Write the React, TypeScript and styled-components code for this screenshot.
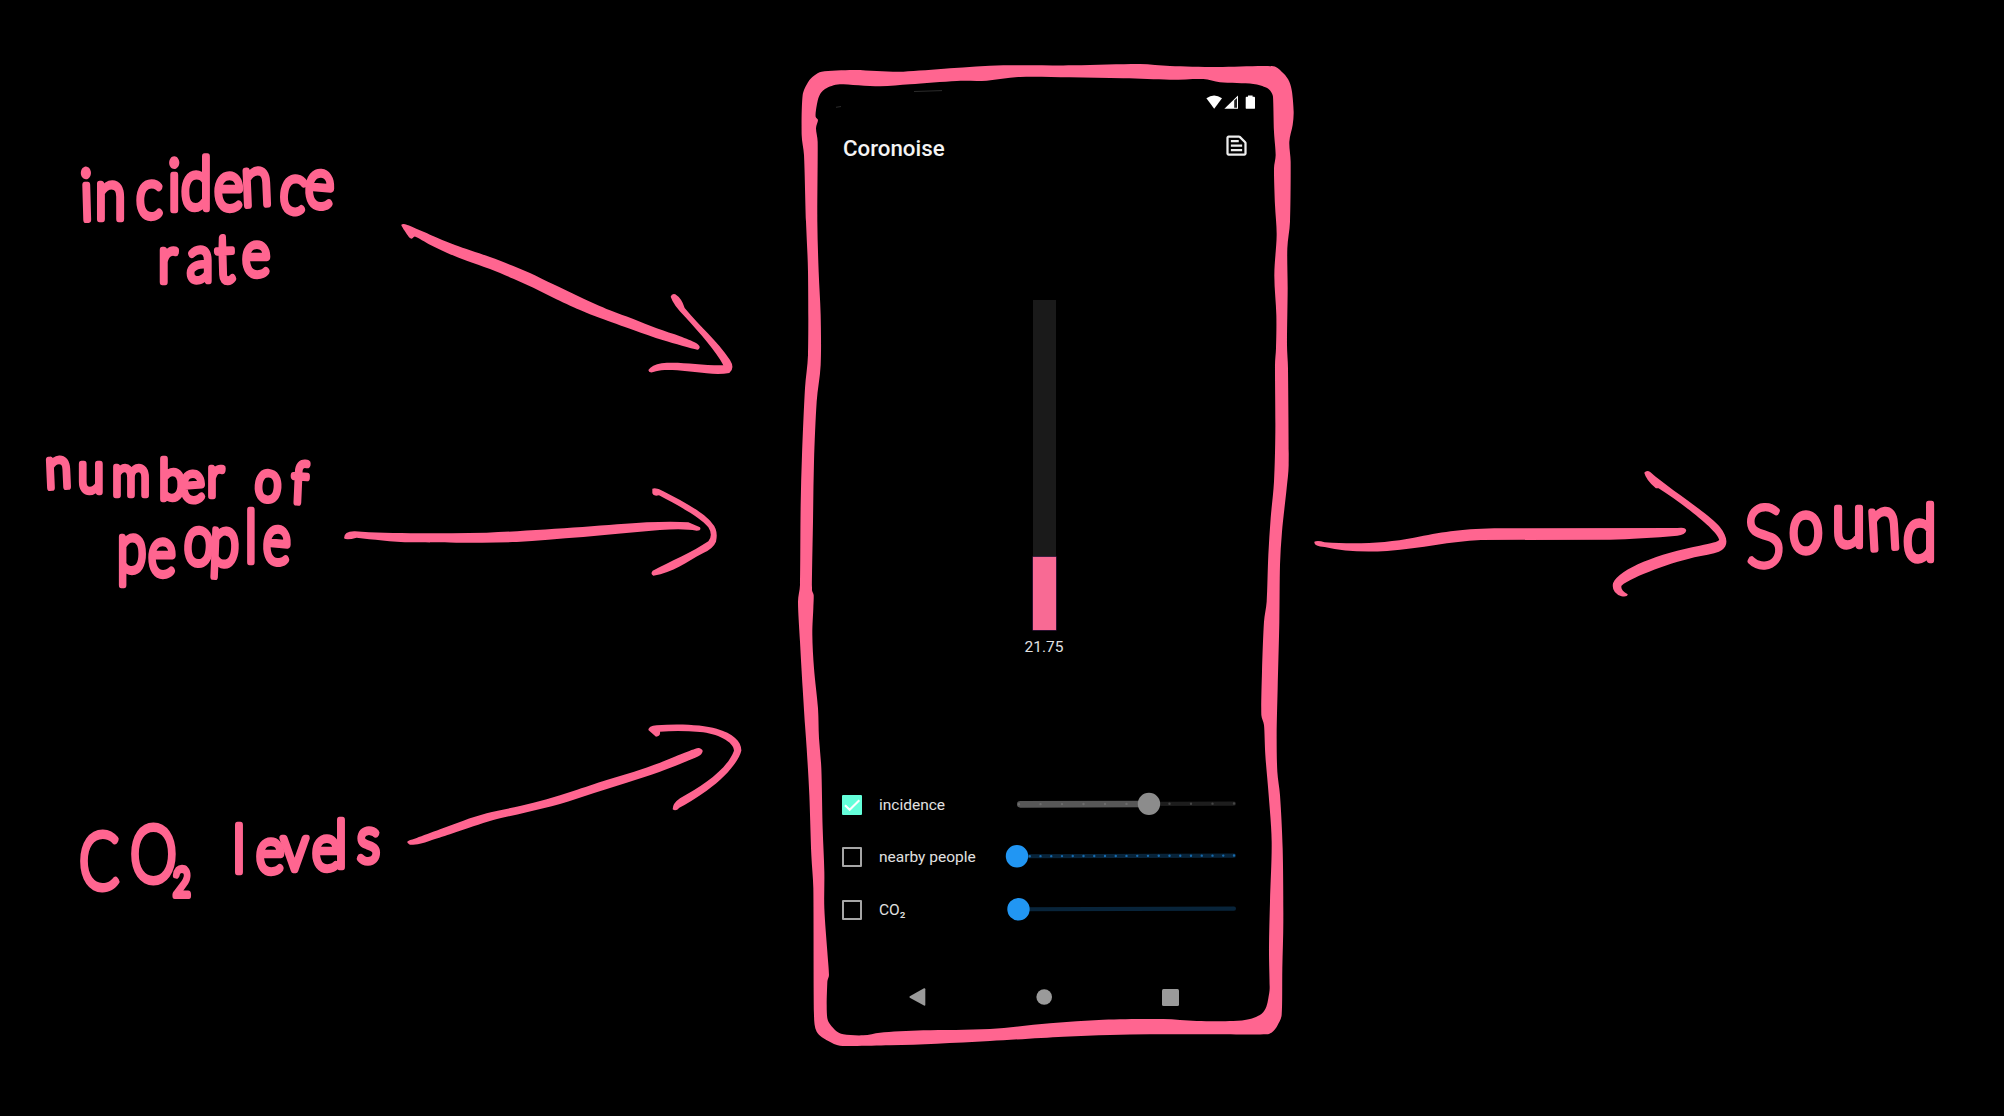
import React from "react";
import styled, { createGlobalStyle } from "styled-components";

const PINK = "#ff6590";

const GlobalStyle = createGlobalStyle`
  html, body { margin: 0; padding: 0; background: #000; overflow: hidden; }
  * { box-sizing: border-box; }
`;

const Canvas = styled.main`
  position: relative;
  width: 2004px;
  height: 1116px;
  background: #000;
  overflow: hidden;
  font-family: Roboto, "Liberation Sans", sans-serif;
`;

/* ---------- hand-drawn layer ---------- */

const Sketch = styled.svg`
  position: absolute;
  inset: 0;
  width: 100%;
  height: 100%;
  fill: ${PINK};
  pointer-events: none;
`;

const Handwriting = styled.text<{ $size: number; $pen: number }>`
  font-family: Lato, "Open Sans", sans-serif;
  font-weight: 300;
  font-size: ${(p) => p.$size}px;
  fill: ${PINK};
  stroke: ${PINK};
  stroke-width: ${(p) => p.$pen}px;
  stroke-linejoin: round;
  stroke-linecap: round;
`;

const BigInitial = styled.tspan<{ $size: number }>`
  font-size: ${(p) => p.$size}px;
  stroke-width: 4px;
`;

type WordProps = {
  text: string;
  size: number;
  initialSize?: number;
  pen?: number;
  squeeze?: number;
  xs: number[];
  ys: number[];
  tilt?: number[];
};

const Word = ({ text, size, initialSize, pen = 6.5, squeeze = 1, xs, ys, tilt }: WordProps) => (
  <Handwriting
    $size={size}
    $pen={pen}
    transform={`scale(${squeeze} 1)`}
    x={xs.map((v) => (v / squeeze).toFixed(1)).join(" ")}
    y={ys.join(" ")}
    rotate={tilt ? tilt.join(" ") : undefined}
  >
    {initialSize ? (
      <>
        <BigInitial $size={initialSize}>{text[0]}</BigInitial>
        {text.slice(1)}
      </>
    ) : (
      text
    )}
  </Handwriting>
);

/* Closed Catmull-Rom curve through a list of "x,y" points. */
const smooth = (list: string, tension = 6) => {
  const pts = list.split(" ").map((s) => s.split(",").map(Number));
  const n = pts.length;
  const at = (i: number) => pts[(i + n) % n];
  let d = `M${pts[0][0]} ${pts[0][1]}`;
  for (let i = 0; i < n; i++) {
    const [a, b, c, e] = [at(i - 1), at(i), at(i + 1), at(i + 2)];
    const len = Math.hypot(c[0] - b[0], c[1] - b[1]);
    const pull = (from: number[], to: number[]) => {
      const dx = to[0] - from[0];
      const dy = to[1] - from[1];
      const m = Math.hypot(dx, dy) || 1;
      const k = Math.min(m / tension, len / 3) / m;
      return [dx * k, dy * k];
    };
    const p = pull(a, c);
    const q = pull(b, e);
    d += `C${(b[0] + p[0]).toFixed(1)} ${(b[1] + p[1]).toFixed(1)} ${(c[0] - q[0]).toFixed(1)} ${(c[1] - q[1]).toFixed(1)} ${c[0]} ${c[1]}`;
  }
  return d + "Z";
};

const frameOuter =
  "38,120 55,80 72,62 95,50 190,45 260,48 340,50 480,40 640,31 850,31 1050,27 1140,33 1280,36 1450,34 1480,55 1498,80 1506,110 1511,170 1508,210 1498,260 1502,320 1500,500 1492,580 1493,700 1491,870 1494,940 1496,1230 1490,1300 1476,1430 1470,1530 1468,1700 1463,1900 1460,2040 1462,2150 1470,2220 1478,2380 1480,2600 1477,2740 1475,2880 1462,2912 1448,2930 1430,2938 1260,2938 1080,2938 960,2940 820,2945 600,2958 440,2966 300,2971 150,2972 115,2958 80,2930 72,2880 70,2500 64,2400 58,2220 50,2080 45,2010 38,1900 30,1760 24,1640 30,1590 32,1350 36,1200 45,1000 54,900 54,650 48,500 42,300 35,240";
const frameInner =
  "78,165 85,130 93,113 105,102 125,93 150,88 270,94 360,88 500,78 590,77 690,66 840,67 1000,70 1140,74 1240,72 1290,82 1390,87 1430,98 1443,110 1449,125 1452,230 1457,300 1452,340 1455,450 1460,540 1453,660 1459,780 1458,880 1455,930 1456,1130 1452,1280 1442,1390 1435,1500 1430,1640 1422,1700 1416,1850 1414,1980 1422,2010 1426,2100 1436,2220 1445,2360 1440,2540 1437,2680 1439,2800 1435,2830 1429,2855 1415,2876 1380,2892 1330,2898 1220,2898 1120,2892 940,2894 780,2905 600,2922 400,2926 270,2933 220,2941 160,2938 135,2925 112,2890 112,2780 117,2760 112,2690 103,2560 103,2450 98,2320 94,2140 87,2050 84,1960 72,1840 67,1740 70,1660 71,1620 66,1605 69,1400 72,1220 80,1040 92,930 92,780 86,650 82,500 83,260 78,220 84,195 77,185";

const topShaft =
  "64,76 72,72 85,76 150,104 225,135 330,171 400,198 450,219 520,253 600,291 690,331 760,357 830,385 900,409 948,429 959,440 952,449 850,421 760,390 660,354 600,330 520,293 460,263 400,236 330,207 260,182 200,158 150,134 106,110 95,116 86,110";
const bottomShaft =
  "202,1117 206,1112 230,1104 300,1078 370,1052 440,1030 540,1008 620,988 700,963 800,930 880,906 960,878 1030,850 1075,834 1088,842 1080,856 1040,874 960,905 860,938 760,970 660,1002 560,1027 460,1050 400,1069 330,1093 270,1112 240,1121 210,1124";

const Annotations = () => (
  <Sketch viewBox="0 0 2004 1116">
    <path
      transform="translate(790 55) scale(.33333)"
      fillRule="evenodd"
      d={smooth(frameOuter) + smooth(frameInner)}
    />
    <path d="M836 107.300l5-.8M914 91.500l28-.9" stroke="#2c2c2c" strokeWidth="1" />
    <g transform="translate(380 200) scale(.33333)">
      <path d={smooth(topShaft)} />
      <path d="M872 290Q875 280 886 283Q905 295 914 324C960 380 1010 420 1050 480Q1066 505 1048 519Q1020 524 980 520C930 515 860 505 828 514Q806 522 805 510Q815 495 845 490C900 484 960 497 1030 496C1010 455 960 400 915 350Q880 315 872 290Z" />
    </g>
    <g transform="translate(340 470) scale(.33333)">
      <path d="M12 205Q12 183 45 184C140 192 280 190 440 188C600 182 800 165 920 157Q1000 154 1045 157L1080 172Q1085 182 1070 182Q1030 174 960 180C800 195 650 208 530 216C400 219 280 218 220 217C150 216 100 208 50 203Q20 212 12 205Z" />
      <path d="M937 56Q950 52 970 64C1020 90 1090 125 1115 158Q1136 180 1128 215Q1120 235 1090 249C1040 275 1000 308 940 317Q930 312 938 302C990 275 1060 245 1105 214Q1120 195 1105 172C1080 140 1010 105 957 76Q940 80 937 70Z" />
      <path d={smooth(bottomShaft)} />
      <path d="M925 780Q925 768 950 766C1020 760 1090 765 1130 776C1180 790 1205 815 1204 842C1198 870 1160 920 1100 962Q1050 997 1018 1013Q1008 1025 998 1018Q998 1000 1020 985C1090 945 1160 900 1182 842C1182 815 1130 790 1080 786Q1020 781 960 785Q962 800 948 800Z" />
    </g>
    <g transform="translate(1280 440) scale(.4464 .3333)">
      <path d="M77 305Q85 300 100 307C180 314 240 308 300 293C360 278 400 267 480 265L890 264Q910 260 910 272Q908 284 890 287C840 293 780 298 740 299L450 300C380 304 320 325 240 333Q160 340 100 321Q75 320 77 305Z" />
      <path d="M816 98Q822 88 830 97C870 145 960 220 985 260C1003 290 1005 315 990 330Q980 340 940 349C880 365 790 410 765 437Q762 450 779 463Q778 472 765 469Q742 458 746 430C760 385 850 340 940 317Q980 307 984 300C980 270 900 190 848 145L842 145Q820 120 816 98Z" />
    </g>

    <Word
      text="incidence"
      size={70}
      squeeze={0.8}
      xs={[81, 95, 136, 168, 181, 214, 242, 278, 304]}
      ys={[220, 219, 218, 210, 209, 210, 206, 210, 206]}
      tilt={[-2, 0, 0, 0, 0, 0, -3, 8, 4]}
    />
    <Word
      text="rate"
      size={66}
      squeeze={0.82}
      xs={[158, 187, 216, 242]}
      ys={[282, 281, 282, 276]}
      tilt={[0, 0, -2, 0]}
    />
    <Word
      text="number of"
      size={56}
      squeeze={0.84}
      xs={[46, 78, 112, 159, 181, 207, 232, 254, 291]}
      ys={[488, 492, 495, 499, 502, 496, 496, 499, 502]}
      tilt={[-3, 0, 0, 0, -4, 0, 0, 5, 3]}
    />
    <Word
      text="people"
      size={70}
      squeeze={0.76}
      xs={[117, 148, 183, 209, 245, 262]}
      ys={[572, 576, 563, 564, 562, 562]}
      tilt={[0, 0, 4, 3, 0, 4]}
    />
    <Word text="CO₂" size={78} squeeze={0.76} pen={6} xs={[79, 130, 172]} ys={[889, 882, 887]} />
    <Word
      text="levels"
      size={66}
      squeeze={0.82}
      xs={[233, 256, 281, 312, 335, 357]}
      ys={[872, 873, 870, 870, 867, 862]}
    />
    <Word
      text="sound"
      size={76}
      initialSize={122}
      squeeze={0.8}
      xs={[1745, 1789, 1832, 1868, 1903]}
      ys={[568, 552, 546, 550, 560]}
      tilt={[-3, 0, 0, -4, 0]}
    />
  </Sketch>
);

/* ---------- phone ---------- */

const Screen = styled.section`
  position: absolute;
  left: 820px;
  top: 86px;
  width: 448px;
  height: 935px;
  display: flex;
  flex-direction: column;
`;

const StatusBar = styled.div`
  height: 32px;
  display: flex;
  justify-content: flex-end;
  align-items: center;
  padding-right: 12px;
`;

const AppBar = styled.header`
  height: 56px;
  display: flex;
  align-items: center;
  justify-content: space-between;
  padding: 0 18px 1px 23px;
`;

const Title = styled.h1`
  margin: 0;
  padding-top: 5px;
  font-size: 22.3px;
  font-weight: 500;
  line-height: 26px;
  color: #f4f4f4;
`;

const IconButton = styled.button`
  display: flex;
  padding: 0;
  border: 0;
  background: none;
  color: #eee;
`;

const Meter = styled.div`
  flex: 1;
  display: flex;
  flex-direction: column;
  align-items: center;
  padding-top: 125.5px;
  gap: 8px;
`;

const Gauge = styled.div`
  width: 23px;
  height: 330px;
  display: flex;
  flex-direction: column;
  justify-content: flex-end;
  background: #1a1a1a;
`;

const GaugeFill = styled.div`
  background: #f86a94;
  box-shadow: 0 0 0 0.5px #5b2160;
`;

const Reading = styled.span`
  font-size: 15.5px;
  line-height: 18px;
  color: #e2e2e2;
`;

const Controls = styled.div`
  display: grid;
  grid-auto-rows: 52.6px;
  padding-left: 22px;
`;

const ControlRow = styled.label`
  display: grid;
  grid-template-columns: 20px 138px 219px;
  align-items: center;
  column-gap: 17px;
  font-size: 15.5px;
  color: #e0e0e0;
`;

const Box = styled.span<{ $on: boolean }>`
  width: 20px;
  height: 20px;
  display: flex;
  align-items: center;
  justify-content: center;
  border: ${(p) => (p.$on ? "0" : "2px solid #a6a6a6")};
  border-radius: 1px;
  background: ${(p) => (p.$on ? "#64ffda" : "transparent")};
`;

const RowLabel = styled.span`
  white-space: nowrap;
`;

const SliderArt = styled.svg`
  width: 219px;
  height: 26px;
  overflow: visible;
  margin: -2px 0 0 -17px;
  transform: rotate(-0.18deg);
`;

const NavBar = styled.nav`
  height: 48px;
  margin-top: 37px;
  display: flex;
  align-items: center;
  justify-content: center;
  gap: 110px;
  svg { fill: #9a9a9a; }
`;

type SliderProps = { value: number; ticks: number; muted?: boolean };

const Slider = ({ value, ticks, muted }: SliderProps) => {
  const cx = 1.5 + value * 216;
  const tone = muted
    ? { rail: "#1d1d1d", active: "#575757", thumb: "#8c8c8c" }
    : { rail: "#08243a", active: "#2196f3", thumb: "#2196f3" };
  return (
    <SliderArt viewBox="0 0 219 26">
      <rect x="0" y="10.8" width="219" height="4.2" rx="2" fill={tone.rail} />
      {value > 0.1 && <rect x="0" y="9.7" width={cx} height="6.6" rx="3.3" fill={tone.active} />}
      {Array.from({ length: ticks }, (_, i) => {
        const x = 2 + (i * 215) / (ticks - 1);
        const fill = muted ? (x < cx ? "#6c6c6c" : "#454545") : "#176aad";
        return <circle key={i} cx={x} cy="12.9" r="1.2" fill={fill} />;
      })}
      <circle cx={cx} cy="12.9" r="11.2" fill={tone.thumb} />
    </SliderArt>
  );
};

const controls = [
  { label: "incidence", on: true, value: 0.604, ticks: 11, muted: true },
  { label: "nearby people", on: false, value: -0.007, ticks: 21, muted: false },
  { label: "CO₂", on: false, value: 0, ticks: 0, muted: false },
];

const reading = 21.75;
const gaugeMax = 98.5;

export default function App() {
  return (
    <>
      <GlobalStyle />
      <Canvas>
        <Screen>
          <StatusBar>
            <svg width="50" height="14" viewBox="0 0 50 14" fill="#fff">
              <path d="M.4 3.2Q8-2.4 16 3.200L8.2 13.800Z" />
              <path d="M32 .5V13.800H18.400Z" />
              <path d="M28.200 5.600 31 3V12.700H28.200Z" fill="#222" />
              <path d="M42 .4h4.600v1.400h1.500q.9 0 .9.900v10.200q0 .9-.9.900H40.600q-.9 0-.9-.9V2.700q0-.9.900-.9H42Z" />
            </svg>
          </StatusBar>
          <AppBar>
            <Title>Coronoise</Title>
            <IconButton aria-label="Notes">
              <svg width="27" height="27" viewBox="0 0 24 24" fill="currentColor">
                <path d="M14.17 5L19 9.83V19H5V5h9.17m0-2H5c-1.1 0-2 .9-2 2v14c0 1.1.9 2 2 2h14c1.1 0 2-.9 2-2V9.83c0-.53-.21-1.04-.59-1.41l-4.83-4.83c-.37-.38-.88-.59-1.41-.59zM7 15h10v2H7v-2zm0-4h10v2H7v-2zm0-4h7v2H7V7z" />
              </svg>
            </IconButton>
          </AppBar>
          <Meter>
            <Gauge>
              <GaugeFill style={{ height: `${(reading / gaugeMax) * 100}%` }} />
            </Gauge>
            <Reading>{reading}</Reading>
          </Meter>
          <Controls>
            {controls.map((c) => (
              <ControlRow key={c.label}>
                <Box $on={c.on}>
                  {c.on && (
                    <svg width="20" height="20" viewBox="0 0 20 20" fill="none" stroke="#fff" strokeWidth="2.1">
                      <path d="M3 10.2 7.7 14.8 17.3 5.2" />
                    </svg>
                  )}
                </Box>
                <RowLabel>{c.label}</RowLabel>
                <Slider value={c.value} ticks={c.ticks} muted={c.muted} />
              </ControlRow>
            ))}
          </Controls>
          <NavBar>
            <svg width="17" height="18" viewBox="0 0 17 18">
              <path d="M.8 8.2 15 .3Q16.3 0 16.3 1.2V16.8Q16.3 18 15 17.6L.8 9.7Q0 9 .8 8.2Z" />
            </svg>
            <svg width="16" height="16" viewBox="0 0 16 16">
              <circle cx="8.2" cy="8" r="7.8" />
            </svg>
            <svg width="17" height="17" viewBox="0 0 17 17">
              <rect width="17" height="17" rx="1.5" />
            </svg>
          </NavBar>
        </Screen>
        <Annotations />
      </Canvas>
    </>
  );
}
